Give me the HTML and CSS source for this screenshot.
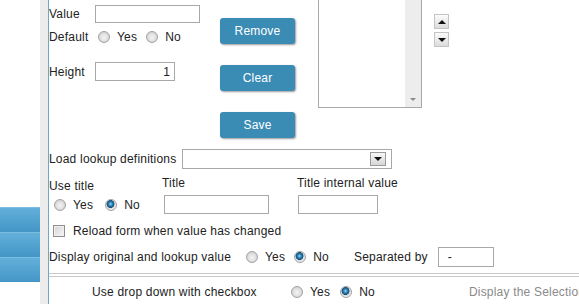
FILE: index.html
```html
<!DOCTYPE html>
<html>
<head>
<meta charset="utf-8">
<link rel="stylesheet" href="styles.css">
</head>
<body>
<div class="page">
  <aside class="side">
    <div class="side-spacer"></div>
    <div class="band"></div>
    <div class="band"></div>
    <div class="band"></div>
  </aside>
  <div class="strip"></div>
  <main class="main">
    <section class="top">
      <div class="fields">
        <div class="frow r1"><span class="lbl">Value</span><input class="txt w105" type="text"></div>
        <div class="frow r2"><span class="lbl">Default</span>
          <span class="radios def">
            <label class="opt"><input type="radio" name="def"><span>Yes</span></label>
            <label class="opt"><input type="radio" name="def"><span>No</span></label>
          </span>
        </div>
        <div class="frow r3"><span class="lbl">Height</span><input class="txt w80 num" type="text" value="1"></div>
      </div>
      <div class="buttons">
        <button class="btn">Remove</button>
        <button class="btn">Clear</button>
        <button class="btn">Save</button>
      </div>
      <div class="listbox">
        <div class="lb-scroll"><span class="tri-down gray"></span></div>
      </div>
      <div class="arrows">
        <span class="arr"><span class="tri-up"></span></span>
        <span class="arr"><span class="tri-down"></span></span>
      </div>
    </section>

    <div class="load">
      <span class="lbl load-lbl">Load lookup definitions</span>
      <span class="sel"><span class="sel-btn"><span class="tri-down"></span></span></span>
    </div>

    <div class="tgrid">
      <span class="lbl use-title">Use title</span>
      <span class="lbl">Title</span>
      <span class="lbl">Title internal value</span>
      <span class="radios ut">
        <label class="opt"><input type="radio" name="ut"><span>Yes</span></label>
        <label class="opt"><input type="radio" name="ut" checked><span>No</span></label>
      </span>
      <input class="txt w105 t-in" type="text">
      <input class="txt w80 ti-in" type="text">
    </div>

    <div class="chk-row">
      <label class="chk"><input type="checkbox"><span>Reload form when value has changed</span></label>
    </div>

    <div class="disp-row">
      <span class="lbl disp-lbl">Display original and lookup value</span>
      <span class="radios dr">
        <label class="opt"><input type="radio" name="dr"><span>Yes</span></label>
        <label class="opt"><input type="radio" name="dr" checked><span>No</span></label>
      </span>
      <span class="lbl sep-lbl">Separated by</span>
      <input class="txt w56 sep-in" type="text" value="-">
    </div>

    <div class="divider"></div>

    <div class="last-row">
      <span class="last-lbl">Use drop down with checkbox</span>
      <span class="radios lr">
        <label class="opt"><input type="radio" name="lr"><span>Yes</span></label>
        <label class="opt"><input type="radio" name="lr" checked><span>No</span></label>
      </span>
      <span class="hint">Display the Selection</span>
    </div>
  </main>
</div>
</body>
</html>
```

FILE: styles.css
```css
* { box-sizing: border-box; }

body {
  margin: 0;
  width: 579px;
  height: 304px;
  overflow: hidden;
  background: #fff;
  color: #222;
  font: 12px/14px "Liberation Sans", Arial, sans-serif;
  letter-spacing: 0.2px;
}

.page { display: flex; height: 304px; }

.side { width: 40px; display: flex; flex-direction: column; flex: none; }
.side-spacer { height: 207px; }
.band {
  height: 25px;
  background: linear-gradient(#62afd9, #4496c6);
  border-top: 1px solid #79bde0;
}

.strip { width: 8px; background: #ececec; flex: none; }

.main {
  flex: 1;
  min-width: 0;
  border-left: 1px solid #6ea8c8;
  overflow: hidden;
  white-space: nowrap;
}

/* top section */
.top { display: flex; align-items: flex-start; height: 138px; }
.fields { width: 151px; padding-top: 5px; display: flex; flex-direction: column; flex: none; }
.frow { display: flex; align-items: center; }
.frow .lbl { width: 46px; flex: none; }
.r1 { height: 18px; }
.r2 { height: 20px; margin-top: 4px; }
.r3 { height: 19px; margin-top: 15px; }

.txt {
  border: 1px solid #a8a8a8;
  height: 18px;
  padding: 0 4px;
  margin: 0;
  font: 12px "Liberation Sans", Arial, sans-serif;
  color: #222;
  background: #fff;
  outline: none;
}
.w105 { width: 105px; }
.w80 { width: 80px; }
.w56 { width: 56px; }
.r3 .txt { height: 19px; }
.num { text-align: right; }

.radios { display: flex; align-items: center; }
.opt { display: flex; align-items: center; }
.opt input {
  -webkit-appearance: none;
  appearance: none;
  width: 12px;
  height: 12px;
  margin: 0;
  border: 1px solid #a2a2a2;
  border-radius: 50%;
  background: radial-gradient(circle at 50% 55%, #f4f4f4 0, #e2e2e2 45%, #c6c6c6 100%);
  flex: none;
}
.opt input:checked {
  background: radial-gradient(circle at 45% 40%, #9fd0ee 0, #2a7fb3 25%, #124f7a 45%, #d9d9d9 52%, #ececec 70%, #c9c9c9 100%);
}
.opt span { margin-left: 7px; }

.def { margin-left: 3px; }
.def .opt + .opt { margin-left: 9px; }

.buttons {
  margin-left: 20px;
  padding-top: 18px;
  display: flex;
  flex-direction: column;
  gap: 21px;
  flex: none;
}
.btn {
  width: 75px;
  height: 26px;
  border: 0;
  border-radius: 3px;
  background: #3b8cb5;
  color: #fff;
  font: 12px "Liberation Sans", Arial, sans-serif;
  letter-spacing: 0.2px;
  padding: 0;
  box-shadow: 1px 1px 2px rgba(0, 0, 0, 0.4);
}

.listbox {
  margin-left: 23px;
  width: 104px;
  height: 108px;
  border: 1px solid #a8a8a8;
  border-top: 0;
  display: flex;
  justify-content: flex-end;
  flex: none;
}
.lb-scroll {
  width: 16px;
  background: #ededed;
  display: flex;
  align-items: flex-end;
  justify-content: center;
  padding-bottom: 6px;
}

.arrows {
  margin-left: 12px;
  padding-top: 14px;
  display: flex;
  flex-direction: column;
  gap: 3px;
}
.arr {
  width: 15px;
  height: 15px;
  border: 1px solid #c4c4c4;
  background: linear-gradient(#fbfbfb, #dcdcdc);
  display: flex;
  align-items: center;
  justify-content: center;
}
.tri-up {
  width: 0; height: 0;
  border-left: 4px solid transparent;
  border-right: 4px solid transparent;
  border-bottom: 4px solid #111;
}
.tri-down {
  width: 0; height: 0;
  border-left: 4px solid transparent;
  border-right: 4px solid transparent;
  border-top: 4px solid #111;
}
.tri-down.gray { border-top-color: #8a8a8a; border-left-width: 3px; border-right-width: 3px; border-top-width: 3px; }

/* load lookup */
.load { display: flex; align-items: center; height: 20px; margin-top: 11px; }
.load-lbl { width: 133px; flex: none; }
.sel {
  width: 210px;
  height: 20px;
  border: 1px solid #a8a8a8;
  display: flex;
  align-items: center;
  justify-content: flex-end;
  padding-right: 5px;
}
.sel-btn {
  width: 16px;
  height: 14px;
  border: 1px solid #9a9a9a;
  background: linear-gradient(#f7f7f7, #d6d6d6);
  display: flex;
  align-items: center;
  justify-content: center;
}

/* title grid */
.tgrid {
  display: grid;
  grid-template-columns: 113px 135px auto;
  grid-template-rows: 14px 19px;
  row-gap: 5px;
  margin-top: 7px;
}
.use-title { padding-top: 3px; }
.ut { padding-left: 5px; }
.ut .opt + .opt { margin-left: 12px; }
.t-in { margin-left: 2px; height: 19px; }
.ti-in { margin-left: 1px; height: 19px; }

/* checkbox row */
.chk-row { height: 14px; margin-top: 10px; padding-left: 4px; display: flex; align-items: center; }
.chk { display: flex; align-items: center; }
.chk input {
  -webkit-appearance: none;
  appearance: none;
  width: 12px;
  height: 12px;
  margin: 0;
  border: 1px solid #8e8e8e;
  background: linear-gradient(135deg, #d4d4d4, #f6f6f6);
  box-shadow: inset 0 0 0 1px #f0f0f0;
}
.chk span { margin-left: 8px; }

/* display row */
.disp-row { display: flex; align-items: center; height: 20px; margin-top: 9px; }
.disp-lbl { width: 197px; flex: none; }
.dr .opt + .opt { margin-left: 9px; }
.sep-lbl { margin-left: 25px; }
.sep-in { margin-left: 10px; height: 20px; padding-left: 9px; }

.divider {
  margin-top: 6px;
  height: 4px;
  border-top: 1px solid #c9c9c9;
  border-bottom: 1px solid #c9c9c9;
}

/* last row */
.last-row { display: flex; align-items: center; height: 30px; }
.last-lbl { width: 242px; padding-left: 43px; flex: none; }
.lr .opt + .opt { margin-left: 10px; }
.hint { margin-left: 94px; color: #8a8a8a; }
```
